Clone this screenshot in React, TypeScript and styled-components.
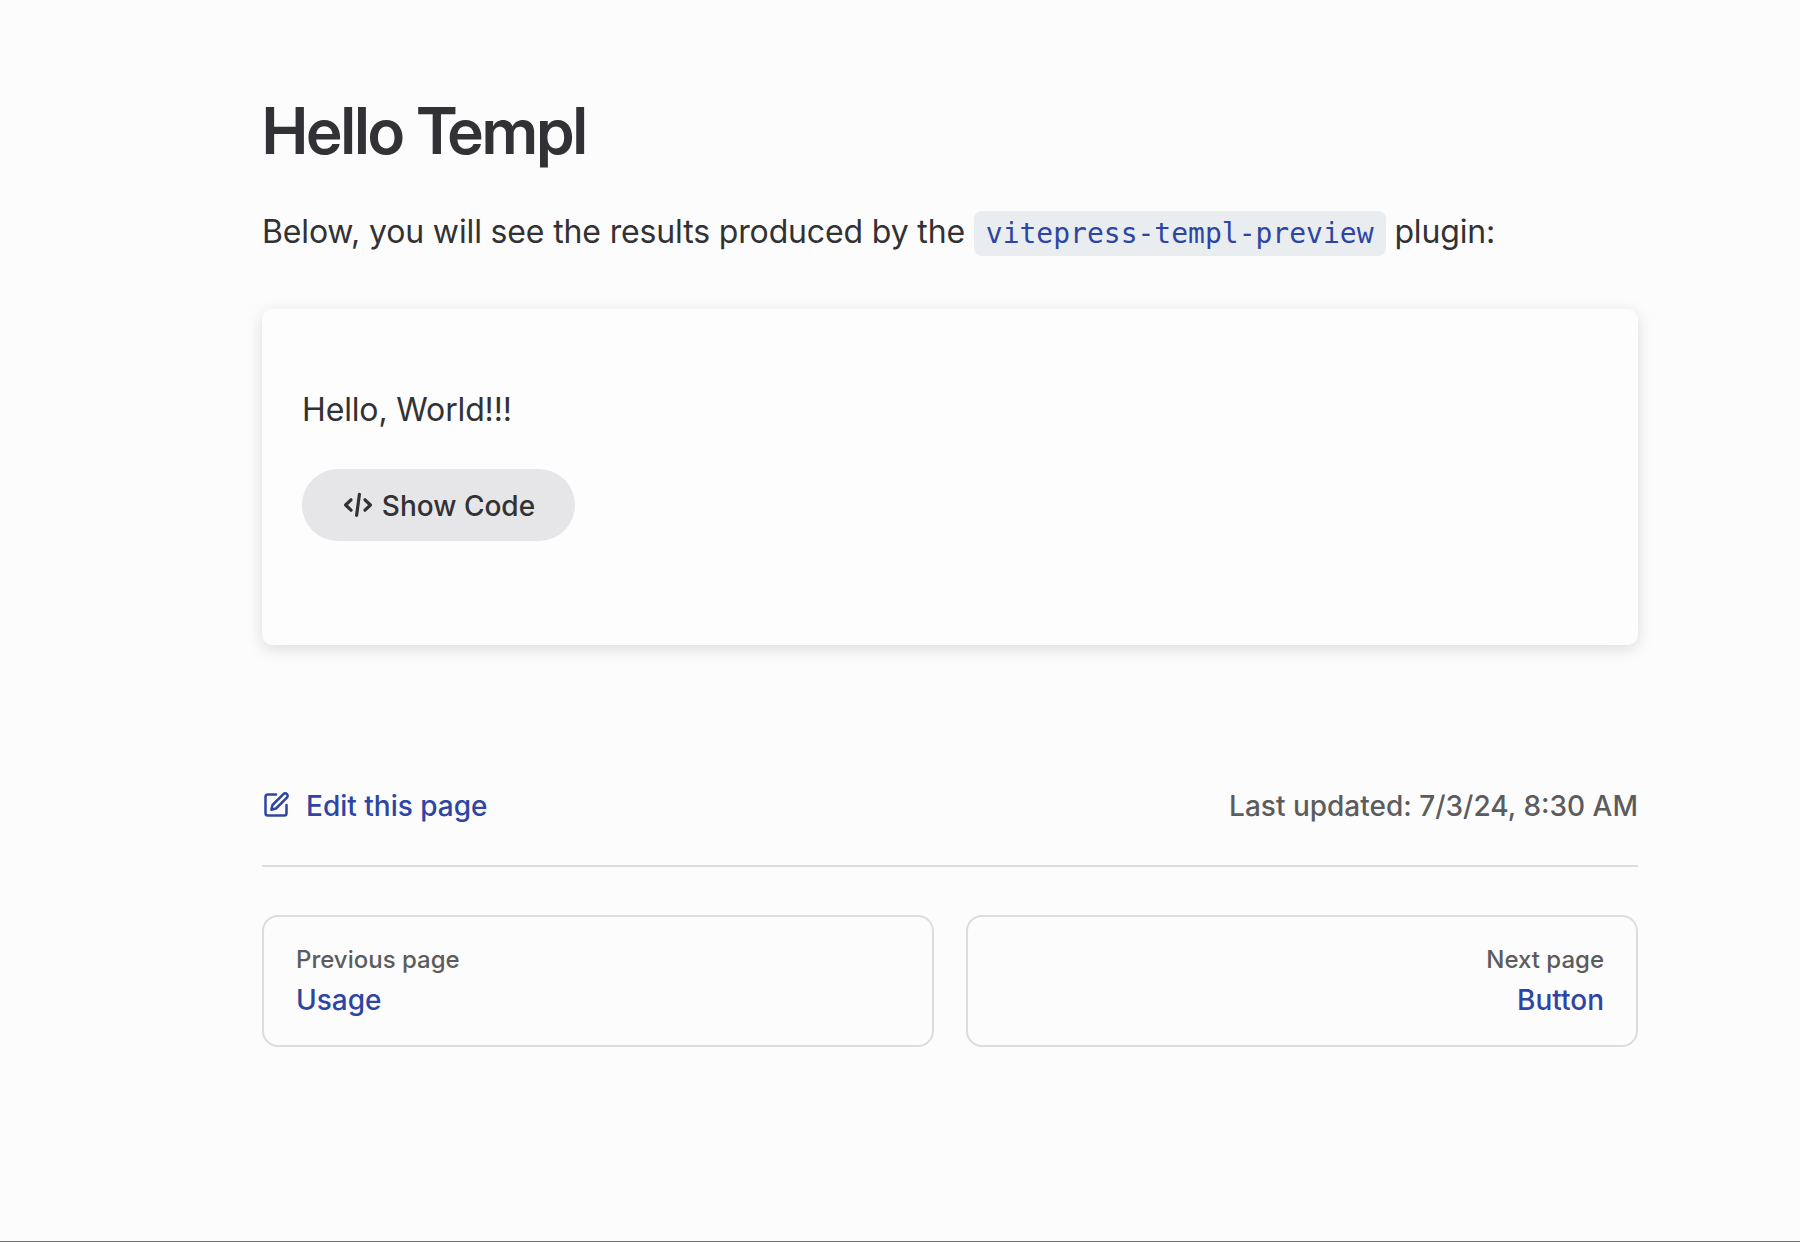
import React from "react";
import styled, { createGlobalStyle } from "styled-components";

const GlobalStyle = createGlobalStyle`
  *, *::before, *::after { box-sizing: border-box; }
  html, body { margin: 0; padding: 0; }
  body {
    background: #fcfcfc;
    color: #323234;
    font-family: Inter, "Liberation Sans", sans-serif;
    font-size: 32px;
    line-height: 56px;
    -webkit-font-smoothing: antialiased;
  }
`;

const Page = styled.div`
  display: flex;
  flex-direction: column;
  height: 1242px;
  padding: 91px 162px 0 262px;
  border-bottom: 1px solid #6e6e70;
  overflow: hidden;
`;

const Title = styled.h1`
  margin: 0;
  font-family: "Inter Display", Inter, sans-serif;
  font-size: 64px;
  line-height: 80px;
  font-weight: 600;
  letter-spacing: -1.2px;
  color: #323236;
`;

const Paragraph = styled.p`
  margin: 32px 0;
  height: 56px;
  padding-top: 1px;
  letter-spacing: -0.145px;
  white-space: nowrap;
`;

const InlineCode = styled.code`
  padding: 6px 12px;
  border-radius: 8px;
  background: #e9edf0;
  color: #2e45a3;
  font-family: "DejaVu Sans Mono", monospace;
  font-size: 28px;
  letter-spacing: 0;
`;

const Preview = styled.section`
  height: 336px;
  margin-top: 18px;
  padding: 40px;
  border-radius: 10px;
  background: #fdfdfd;
  box-shadow: 0 4px 16px rgba(0, 0, 0, 0.13);
`;

const CodeButton = styled.button`
  display: flex;
  align-items: center;
  justify-content: center;
  gap: 9px;
  width: 273px;
  height: 72px;
  padding: 0 0 0 1px;
  border: 0;
  border-radius: 36px;
  background: #e6e6e8;
  color: #323234;
  font: 500 28px/40px Inter, sans-serif;
`;

const ButtonLabel = styled.span`
  padding-top: 2px;
`;

const Footer = styled.footer`
  margin-top: 128px;
`;

const EditInfo = styled.div`
  display: flex;
  justify-content: space-between;
  height: 94px;
  border-bottom: 2px solid #dcdcdd;
  font-size: 28px;
  line-height: 66px;
  font-weight: 500;
`;

const EditLink = styled.a`
  display: flex;
  gap: 16px;
  color: #2e45a3;
`;

const Updated = styled.p`
  margin: 0;
  color: #5c5c5e;
`;

const Pager = styled.nav`
  display: grid;
  grid-template-columns: 1fr 1fr;
  gap: 32px;
  padding-top: 48px;
`;

const PagerLink = styled.a<{ $align: "left" | "right" }>`
  display: flex;
  flex-direction: column;
  height: 132px;
  padding: 23px 32px 25px;
  border: 2px solid #dcdcdd;
  border-radius: 16px;
  text-align: ${(p) => p.$align};
  font-weight: 500;
  line-height: 40px;
`;

const PagerLabel = styled.span`
  font-size: 24px;
  color: #5c5c5e;
`;

const PagerTitle = styled.span`
  font-size: 28px;
  color: #2e45a3;
`;

const StrokeIcon = styled.svg`
  display: block;
  flex: none;
  fill: none;
  stroke: currentColor;
  stroke-linecap: round;
  stroke-linejoin: round;
`;

const PenSvg = styled(StrokeIcon)`
  margin-top: 18px;
`;

const CodeIcon = () => (
  <StrokeIcon width="30" height="28" viewBox="0 0 30 28" strokeWidth="3.2">
    <path d="M8 8.8L2.6 14L8 19.2M22 8.8L27.4 14L22 19.2M16.4 3.4L13.6 24.4" />
  </StrokeIcon>
);

const PenIcon = () => (
  <PenSvg width="28" height="28" viewBox="0 0 24 24" strokeWidth="2.15">
    <path d="M12 3H5a2 2 0 0 0-2 2v14a2 2 0 0 0 2 2h14a2 2 0 0 0 2-2v-7" />
    <path d="M18.375 2.625a2.121 2.121 0 1 1 3 3L12 15l-4 1 1-4Z" />
  </PenSvg>
);

export default function App() {
  return (
    <>
      <GlobalStyle />
      <Page>
        <Title>Hello Templ</Title>
        <Paragraph>
          Below, you will see the results produced by the{" "}
          <InlineCode>vitepress-templ-preview</InlineCode> plugin:
        </Paragraph>
        <Preview>
          <Paragraph>Hello, World!!!</Paragraph>
          <CodeButton>
            <CodeIcon />
            <ButtonLabel>Show Code</ButtonLabel>
          </CodeButton>
        </Preview>
        <Footer>
          <EditInfo>
            <EditLink>
              <PenIcon />
              <span>Edit this page</span>
            </EditLink>
            <Updated>Last updated: 7/3/24, 8:30 AM</Updated>
          </EditInfo>
          <Pager>
            <PagerLink $align="left">
              <PagerLabel>Previous page</PagerLabel>
              <PagerTitle>Usage</PagerTitle>
            </PagerLink>
            <PagerLink $align="right">
              <PagerLabel>Next page</PagerLabel>
              <PagerTitle>Button</PagerTitle>
            </PagerLink>
          </Pager>
        </Footer>
      </Page>
    </>
  );
}
